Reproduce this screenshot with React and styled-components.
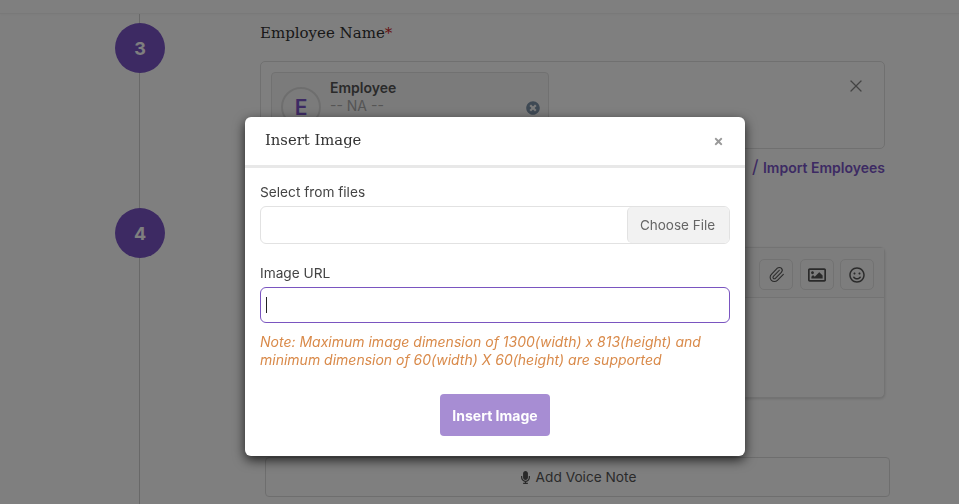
import { useEffect, useRef } from "react";
import styled, { createGlobalStyle } from "styled-components";
import { FaMicrophone, FaRegImage, FaRegSmile, FaTimes, FaTimesCircle } from "react-icons/fa";
import { Paperclip, X } from "lucide-react";

const Global = createGlobalStyle`
  html, body { margin: 0; height: 100%; overflow: hidden; background: #fff; }
  * { box-sizing: border-box; }
  body { font-family: "Inter", "Open Sans", sans-serif; color: #333; }
`;

const slab = `"DejaVu Serif", "Liberation Serif", serif`;

const Page = styled.div`
  height: 504px;
  overflow: hidden;
`;

const TopBar = styled.div`
  height: 14px;
  border-bottom: 1px solid #f2f2f2;
  box-shadow: 0 1px 2px rgba(0, 0, 0, 0.03);
`;

const Timeline = styled.div`
  position: relative;
  padding-left: 115px;
  &::before {
    content: "";
    position: absolute;
    left: 139px;
    top: 0;
    height: 490px;
    width: 1px;
    background: #d0d0d0;
  }
`;

const Step = styled.section`
  display: grid;
  grid-template-columns: 50px minmax(0, 1fr);
  column-gap: 95px;
  width: 770px;
  padding-top: ${(p) => p.$top}px;
`;

const Circle = styled.div`
  position: relative;
  width: 50px;
  height: 50px;
  margin-top: ${(p) => p.$offset || 0}px;
  border-radius: 50%;
  background: #7a55c7;
  color: #fff;
  font: 700 18px "Inter", sans-serif;
  display: flex;
  align-items: center;
  justify-content: center;
`;

const Heading = styled.h3`
  margin: 0;
  font: 500 15px/20px ${slab};
  color: #333;
  em { color: #c22; font-style: normal; }
`;

const SelectBox = styled.div`
  position: relative;
  margin-top: 18px;
  height: 88px;
  border: 1px solid #e0e0e0;
  border-radius: 5px;
  padding: 10px;
`;

const Chip = styled.div`
  display: flex;
  gap: 9px;
  width: 278px;
  height: 62px;
  padding: 14px 9px;
  border: 1px solid #e2e2e2;
  border-radius: 4px;
  background: #f7f7f7;
`;

const Avatar = styled.div`
  flex: none;
  width: 40px;
  height: 40px;
  border: 2px solid #ddd;
  border-radius: 50%;
  color: #7a55c7;
  font-size: 21px;
  font-weight: 600;
  display: flex;
  align-items: center;
  justify-content: center;
`;

const ChipText = styled.div`
  flex: 1;
  margin-top: -8px;
  strong { display: block; font-size: 14px; line-height: 18px; font-weight: 600; color: #555; }
  span { display: block; font-size: 14px; line-height: 18px; color: #aaa; }
`;

const ChipClear = styled.span`
  color: #7d93a8;
  font-size: 14px;
  margin-top: 14px;
  margin-right: -1px;
`;

const ClearAll = styled.span`
  position: absolute;
  top: 14px;
  right: 18px;
  color: #888;
  display: flex;
`;

const LinkRow = styled.div`
  margin-top: 9px;
  text-align: right;
  font-size: 14px;
  line-height: 18px;
  font-weight: 600;
  color: #7a55c7;
  i { font-style: normal; font-weight: 400; font-size: 18px; margin-right: 1px; }
`;

const Editor = styled.div`
  margin-top: 70px;
  height: 151px;
  border: 1px solid #e6e6e6;
  border-radius: 5px;
  background: #fff;
  box-shadow: 0 1px 3px rgba(0, 0, 0, 0.15);
`;

const EditorTools = styled.div`
  height: 50px;
  padding: 11px 10px 0 0;
  border-bottom: 1px solid #e6e6e6;
  display: flex;
  justify-content: flex-end;
  gap: 6.5px;
  background: #fafafa;
`;

const ToolButton = styled.span`
  width: 34px;
  height: 31px;
  border: 1px solid #e4e4e4;
  border-radius: 5px;
  color: #555;
  font-size: ${(p) => p.$size}px;
  display: flex;
  align-items: center;
  justify-content: center;
`;

const VoiceButton = styled.div`
  margin: 59px 0 0 5px;
  width: 625px;
  height: 40px;
  border: 1px solid #ddd;
  border-radius: 4px;
  display: flex;
  align-items: center;
  justify-content: center;
  gap: 4px;
  font-size: 13.7px;
  color: #555;
`;

const Backdrop = styled.div`
  position: fixed;
  inset: 0;
  background: rgba(0, 0, 0, 0.5);
`;

const Modal = styled.div`
  position: absolute;
  left: 245px;
  top: 117px;
  width: 500px;
  height: 339px;
  background: #fff;
  border-radius: 6px;
  box-shadow: 0 4px 12px rgba(0, 0, 0, 0.75);
`;

const ModalHead = styled.header`
  height: 51px;
  padding: 0 21px 3px 20px;
  border-bottom: 3px solid #e8e8e8;
  display: flex;
  align-items: center;
  justify-content: space-between;
`;

const ModalTitle = styled.h4`
  margin: 0;
  font: 500 14.8px ${slab};
  color: #333;
`;

const CloseIcon = styled.span`
  display: flex;
  color: #999;
  font-size: 11px;
  margin-top: 3px;
`;

const ModalBody = styled.div`
  padding: 15px 15px 0;
`;

const Label = styled.label`
  display: block;
  font-size: 13.7px;
  line-height: 18px;
  color: #444;
  margin-bottom: 5px;
`;

const FileField = styled.div`
  display: flex;
  justify-content: flex-end;
  height: 38px;
  margin-bottom: 20px;
  border: 1px solid #e2e2e2;
  border-radius: 6px;
`;

const ChooseFile = styled.span`
  width: 102px;
  padding-right: 2px;
  background: #f2f2f2;
  border-left: 1px solid #e2e2e2;
  border-radius: 5px;
  color: #666;
  font-size: 13.5px;
  display: flex;
  align-items: center;
  justify-content: center;
`;

const UrlField = styled.div`
  position: relative;
`;

const UrlInput = styled.input`
  display: block;
  width: 100%;
  height: 36px;
  padding: 0 5px;
  border: 1px solid #7a55c0;
  border-radius: 6px;
  outline: none;
  font: 14px "Inter", sans-serif;
  caret-color: transparent;
`;

// headless capture drops the native caret
const Caret = styled.span`
  position: absolute;
  left: 6px;
  top: 10px;
  width: 1px;
  height: 16px;
  background: #222;
`;

const Note = styled.p`
  margin: 10px 0 0;
  font-size: 14px;
  line-height: 18px;
  font-style: italic;
  color: #d98a4a;
`;

const InsertButton = styled.button`
  display: block;
  width: 110px;
  height: 42px;
  margin: 25px auto 0;
  border: 0;
  border-radius: 4px;
  background: #a78dd3;
  color: #fff;
  font: 700 14px "Inter", sans-serif;
`;

export default function App() {
  const urlRef = useRef(null);

  useEffect(() => {
    urlRef.current.focus();
  }, []);

  return (
    <Page>
      <Global />
      <TopBar />
      <Timeline>
        <Step $top={9}>
          <Circle>3</Circle>
          <div>
            <Heading>
              Employee Name<em>*</em>
            </Heading>
            <SelectBox>
              <Chip>
                <Avatar>E</Avatar>
                <ChipText>
                  <strong>Employee</strong>
                  <span>-- NA --</span>
                </ChipText>
                <ChipClear>
                  <FaTimesCircle />
                </ChipClear>
              </Chip>
              <ClearAll>
                <X size={20} strokeWidth={1.5} />
              </ClearAll>
            </SelectBox>
            <LinkRow>
              <i>/</i> Import Employees
            </LinkRow>
          </div>
        </Step>
        <Step $top={0}>
          <Circle $offset={31}>4</Circle>
          <div>
            <Editor>
              <EditorTools>
                <ToolButton $size={15}>
                  <Paperclip size={17} strokeWidth={1.5} />
                </ToolButton>
                <ToolButton $size={18}>
                  <FaRegImage />
                </ToolButton>
                <ToolButton $size={16}>
                  <FaRegSmile />
                </ToolButton>
              </EditorTools>
            </Editor>
            <VoiceButton>
              <FaMicrophone size={13} /> Add Voice Note
            </VoiceButton>
          </div>
        </Step>
      </Timeline>
      <Backdrop />
      <Modal>
        <ModalHead>
          <ModalTitle>Insert Image</ModalTitle>
          <CloseIcon>
            <FaTimes />
          </CloseIcon>
        </ModalHead>
        <ModalBody>
          <Label>Select from files</Label>
          <FileField>
            <ChooseFile>Choose File</ChooseFile>
          </FileField>
          <Label>Image URL</Label>
          <UrlField>
            <UrlInput ref={urlRef} />
            <Caret />
          </UrlField>
          <Note>
            Note: Maximum image dimension of 1300(width) x 813(height) and minimum dimension of 60(width) X 60(height)
            are supported
          </Note>
          <InsertButton>Insert Image</InsertButton>
        </ModalBody>
      </Modal>
    </Page>
  );
}
